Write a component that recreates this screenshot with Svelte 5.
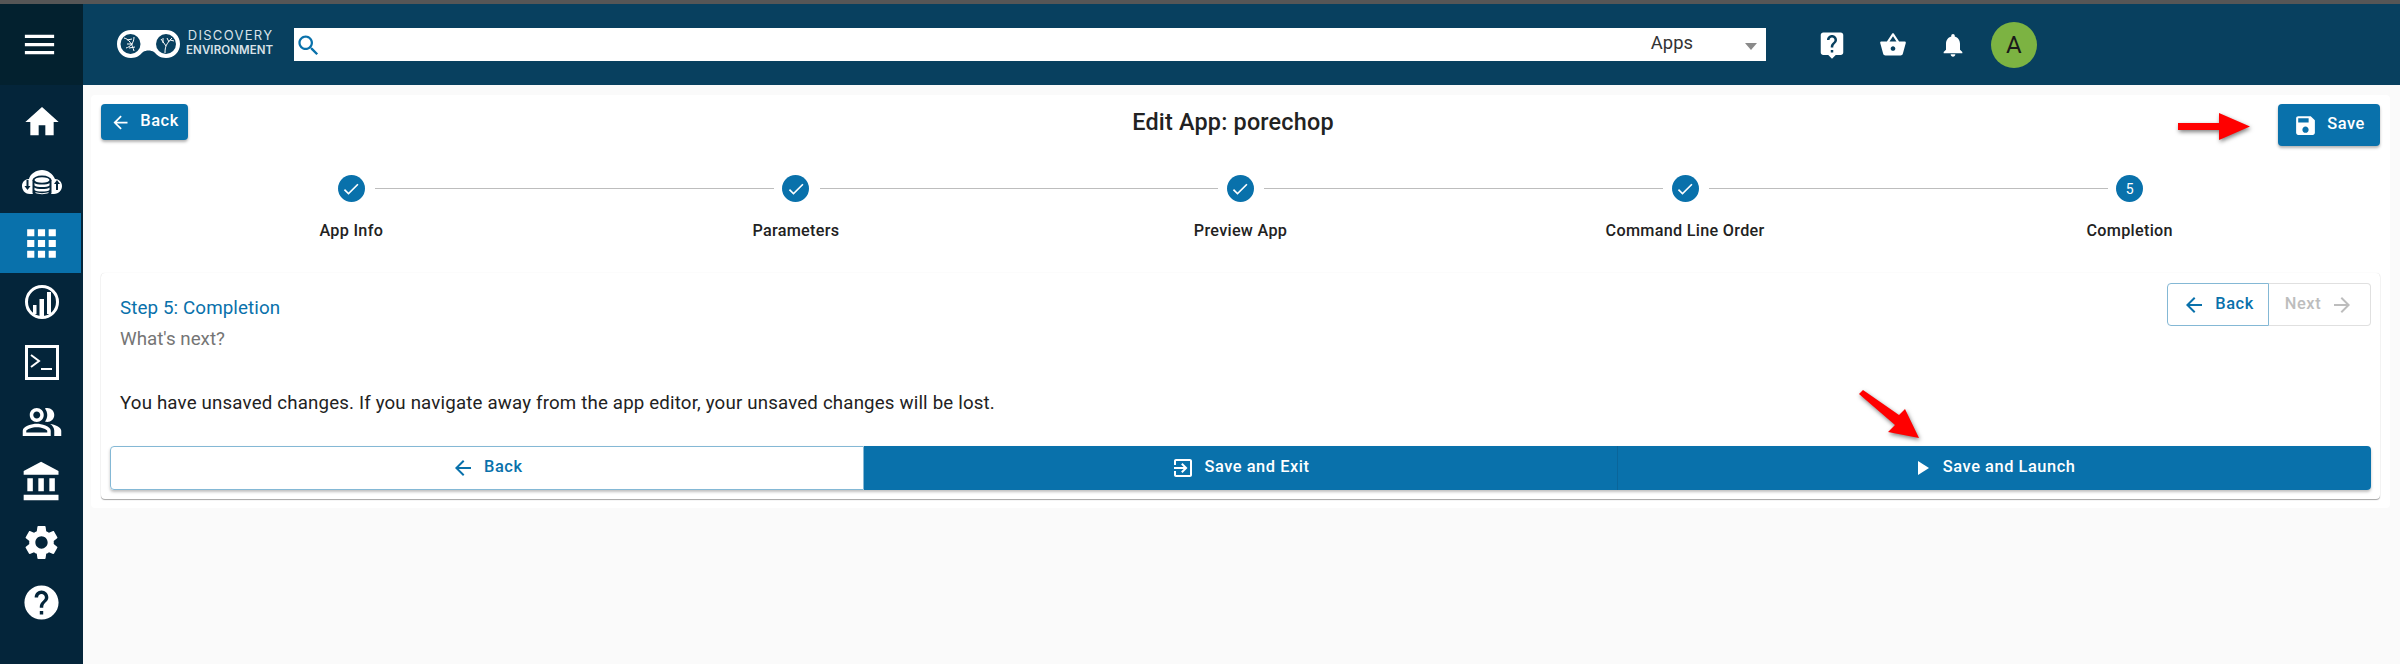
<script lang="ts">
  const icons: Record<string, string> = {
    menu: "M3 18h18v-2H3v2zm0-5h18v-2H3v2zm0-7v2h18V6H3z",
    home: "M10 20v-6h4v6h5v-8h3L12 3 2 12h3v8z",
    apps: "M4 8h4V4H4v4zm6 12h4v-4h-4v4zm-6 0h4v-4H4v4zm0-6h4v-4H4v4zm6 0h4v-4h-4v4zm6-10v4h4V4h-4zm-6 4h4V4h-4v4zm6 6h4v-4h-4v4zm0 6h4v-4h-4v4z",
    people:
      "M16.67 13.13C18.04 14.06 19 15.32 19 17v3h4v-3c0-2.18-3.57-3.47-6.33-3.87zM15 12c2.21 0 4-1.79 4-4s-1.79-4-4-4c-.47 0-.91.1-1.33.24C14.5 5.27 15 6.58 15 8s-.5 2.73-1.33 3.76c.42.14.86.24 1.33.24zM9 12c2.21 0 4-1.79 4-4s-1.79-4-4-4-4 1.79-4 4 1.79 4 4 4zm0-6c1.1 0 2 .9 2 2s-.9 2-2 2-2-.9-2-2 .9-2 2-2zM9 13c-2.67 0-8 1.34-8 4v3h16v-3c0-2.66-5.33-4-8-4zm6 5H3v-.99C3.2 16.29 6.3 15 9 15s5.8 1.29 6 2v1z",
    bank: "M4 10v7h3v-7H4zm6 0v7h3v-7h-3zM2 22h19v-3H2v3zm14-12v7h3v-7h-3zm-4.5-9L2 6v2h19V6l-9.5-5z",
    settings:
      "M19.14 12.94c.04-.3.06-.61.06-.94 0-.32-.02-.64-.07-.94l2.03-1.58c.18-.14.23-.41.12-.61l-1.92-3.32c-.12-.22-.37-.29-.59-.22l-2.39.96c-.5-.38-1.03-.7-1.62-.94l-.36-2.54c-.04-.24-.24-.41-.48-.41h-3.84c-.24 0-.43.17-.47.41l-.36 2.54c-.59.24-1.13.57-1.62.94l-2.39-.96c-.22-.08-.47 0-.59.22L2.74 8.87c-.12.21-.08.47.12.61l2.03 1.58c-.05.3-.09.63-.09.94s.02.64.07.94l-2.03 1.58c-.18.14-.23.41-.12.61l1.92 3.32c.12.22.37.29.59.22l2.39-.96c.5.38 1.03.7 1.62.94l.36 2.54c.05.24.24.41.48.41h3.84c.24 0 .44-.17.47-.41l.36-2.54c.59-.24 1.13-.56 1.62-.94l2.39.96c.22.08.47 0 .59-.22l1.92-3.32c.12-.22.07-.47-.12-.61l-2.01-1.58zM12 15.6c-1.98 0-3.6-1.62-3.6-3.6s1.62-3.6 3.6-3.6 3.6 1.62 3.6 3.6-1.62 3.6-3.6 3.6z",
    help: "M12 2C6.48 2 2 6.48 2 12s4.48 10 10 10 10-4.48 10-10S17.52 2 12 2zm1 17h-2v-2h2v2zm2.07-7.75l-.9.92C13.45 12.9 13 13.5 13 15h-2v-.5c0-1.1.45-2.1 1.17-2.83l1.24-1.26c.37-.36.59-.86.59-1.41 0-1.1-.9-2-2-2s-2 .9-2 2H8c0-2.21 1.79-4 4-4s4 1.79 4 4c0 .88-.36 1.68-.93 2.25z",
    search:
      "M15.5 14h-.79l-.28-.27C15.41 12.59 16 11.11 16 9.5 16 5.91 13.09 3 9.5 3S3 5.91 3 9.5 5.91 16 9.5 16c1.61 0 3.09-.59 4.23-1.57l.27.28v.79l5 4.99L20.49 19l-4.99-5zm-6 0C7.01 14 5 11.99 5 9.5S7.01 5 9.5 5 14 7.01 14 9.5 11.99 14 9.5 14z",
    livehelp:
      "M19 2H5c-1.11 0-2 .9-2 2v14c0 1.1.89 2 2 2h4l3 3 3-3h4c1.1 0 2-.9 2-2V4c0-1.1-.9-2-2-2zm-6 16h-2v-2h2v2zm2.07-7.75l-.9.92C13.45 11.9 13 12.5 13 14h-2v-.5c0-1.1.45-2.1 1.17-2.83l1.24-1.26c.37-.36.59-.86.59-1.41 0-1.1-.9-2-2-2s-2 .9-2 2H8c0-2.21 1.79-4 4-4s4 1.79 4 4c0 .88-.36 1.68-.93 2.25z",
    basket:
      "M17.21 9l-4.38-6.56c-.19-.28-.51-.42-.83-.42-.32 0-.64.14-.83.43L6.79 9H2c-.55 0-1 .45-1 1 0 .09.01.18.04.27l2.54 9.27c.23.84 1 1.46 1.92 1.46h13c.92 0 1.69-.62 1.93-1.46l2.54-9.27L23 10c0-.55-.45-1-1-1h-4.79zM9 9l3-4.4L15 9H9zm3 8c-1.1 0-2-.9-2-2s.9-2 2-2 2 .9 2 2-.9 2-2 2z",
    bell: "M12 22c1.1 0 2-.9 2-2h-4c0 1.1.89 2 2 2zm6-6v-5c0-3.07-1.64-5.64-4.5-6.32V4c0-.83-.67-1.5-1.5-1.5s-1.5.67-1.5 1.5v.68C7.63 5.36 6 7.92 6 11v5l-2 2v1h16v-1l-2-2z",
    save: "M17 3H5c-1.11 0-2 .9-2 2v14c0 1.1.89 2 2 2h14c1.1 0 2-.9 2-2V7l-4-4zm-5 16c-1.66 0-3-1.34-3-3s1.34-3 3-3 3 1.34 3 3-1.34 3-3 3zm3-10H5V5h10v4z",
    exit: "M10.09 15.59L11.5 17l5-5-5-5-1.41 1.41L12.67 11H3v2h9.67l-2.58 2.59zM19 3H5c-1.11 0-2 .9-2 2v4h2V5h14v14H5v-4H3v4c0 1.1.89 2 2 2h14c1.1 0 2-.9 2-2V5c0-1.1-.9-2-2-2z",
    play: "M8 5v14l11-7z",
    back: "M20 11H7.83l5.59-5.59L12 4l-8 8 8 8 1.41-1.41L7.83 13H20v-2z",
    forward: "M12 4l-1.41 1.41L16.17 11H4v2h12.17l-5.58 5.59L12 20l8-8z",
    check: "M9 16.17L4.83 12l-1.41 1.41L9 19 21 7l-1.41-1.41z",
  };

  const steps = ["App Info", "Parameters", "Preview App", "Command Line Order", "Completion"];
  const activeStep = 4;
</script>

{#snippet icon(name: string, size: number)}
  <svg class="icon" width={size} height={size} viewBox="0 0 24 24" aria-hidden="true">
    <path d={icons[name]} />
  </svg>
{/snippet}

<div class="topline"></div>
<div class="page">
  <nav class="sidebar">
    <div class="burger">{@render icon("menu", 39)}</div>
    <ul class="nav-list">
      <li>{@render icon("home", 40)}</li>
      <li>
        <svg width="42" height="27" viewBox="0 0 42 27" aria-hidden="true">
          <path class="fill" d="M9 25C3 25 1 20 1 17c0-4 3-7 7-7 1-5 7-9 13-9s11 4 13 9c4 0 7 3 7 7 0 4-3 8-8 8z" />
          <ellipse class="dark" cx="21" cy="11" rx="9.5" ry="4.4" />
          <path class="dark" d="M11.500 11h19v13c0 1.500-4 3-9.500 3s-9.500-1.500-9.500-3z" />
          <ellipse class="fill" cx="21" cy="11" rx="7.500" ry="2.800" />
          <path class="fill" d="M13.500 14c2 2 13 2 15 0v2.500c-2 2-13 2-15 0zm0 4.500c2 2 13 2 15 0v2.500c-2 2-13 2-15 0zm1 4.500c3 1.500 10 1.500 13 0v1c-3 1.500-10 1.500-13 0z" />
          <path class="dark" d="M5.500 11h2v6h2l-3 4-3-4h2zM35 21h2v-6h2l-3-4-3 4h2z" />
        </svg>
      </li>
      <li class="active">{@render icon("apps", 43)}</li>
      <li>
        <svg width="36" height="36" viewBox="0 0 36 36" aria-hidden="true">
          <circle class="ring" cx="18" cy="18" r="15.500" />
          <path class="fill" d="M9 21h3.500v9H9zM15.500 15h4.500v18h-4.500zM23 8h4v22h-4z" />
        </svg>
      </li>
      <li>
        <svg width="34" height="35" viewBox="0 0 34 35" aria-hidden="true">
          <rect class="frame" x="1.500" y="1.500" width="31" height="32" />
          <path class="chev" d="M6 10l8 6-8 6" />
          <path class="fill" d="M16 23h11v2H16z" />
        </svg>
      </li>
      <li>{@render icon("people", 42)}</li>
      <li>{@render icon("bank", 44)}</li>
      <li>{@render icon("settings", 41)}</li>
      <li>{@render icon("help", 41)}</li>
    </ul>
  </nav>

  <div class="main">
    <header class="appbar">
      <div class="brand">
        <svg width="63" height="29" viewBox="0 0 63 29" aria-hidden="true">
          <path class="fill" d="M14 1h35c8 0 14 6 14 14s-6 14-14 14c-6 0-9-3-12-6-3-2-8-2-11 0-3 3-6 6-12 6C6 29 0 23 0 15S6 1 14 1z" />
          <circle class="lens" cx="13.500" cy="15" r="10" />
          <circle class="lens" cx="49" cy="15" r="10" />
          <path class="thin" d="M7 9c5 1 8 6 10 13M9 19c4-1 8-5 8-11M10 11l5-1M10 15l6 0M12 19l6-1" />
          <path class="thin" d="M48 24c0-6 1-9 7-15M49 17l-5-7M46 14l0-5M52 13l-2-4M53 11l4 1" />
        </svg>
        <div class="brand-text">
          <span class="brand-top">DISCOVERY</span>
          <span class="brand-bottom">ENVIRONMENT</span>
        </div>
      </div>

      <div class="search">
        <span class="search-icon">{@render icon("search", 27)}</span>
        <span class="scope">Apps</span>
        <span class="caret"></span>
      </div>

      <div class="actions">
        <span class="action">{@render icon("livehelp", 30)}</span>
        <span class="action">{@render icon("basket", 28)}</span>
        <span class="action">{@render icon("bell", 28)}</span>
        <span class="action"><span class="avatar">A</span></span>
      </div>
    </header>

    <div class="content">
      <section class="panel">
        <div class="toolbar">
          <button type="button" class="btn contained small">{@render icon("back", 21)}<span>Back</span></button>
          <h1>Edit App: porechop</h1>
          <button type="button" class="btn contained tall">{@render icon("save", 25)}<span>Save</span></button>
        </div>

        <ol class="stepper">
          {#each steps as label, i}
            <li class="step" class:last={i === steps.length - 1}>
              <span class="dot">
                {#if i < activeStep}
                  {@render icon("check", 20)}
                {:else}
                  {i + 1}
                {/if}
              </span>
              <span class="step-label">{label}</span>
            </li>
          {/each}
        </ol>

        <div class="card">
          <div class="card-head">
            <div class="card-title">
              <div class="step-title">Step 5: Completion</div>
              <div class="step-sub">What's next?</div>
            </div>
            <div class="pager">
              <button type="button" class="btn outlined">{@render icon("back", 24)}<span>Back</span></button>
              <button type="button" class="btn disabled" disabled><span>Next</span>{@render icon("forward", 24)}</button>
            </div>
          </div>

          <p class="message">You have unsaved changes. If you navigate away from the app editor, your unsaved changes will be lost.</p>

          <div class="btn-group">
            <button type="button" class="btn outlined">{@render icon("back", 24)}<span>Back</span></button>
            <button type="button" class="btn contained">{@render icon("exit", 24)}<span>Save and Exit</span></button>
            <button type="button" class="btn contained launch">{@render icon("play", 24)}<span>Save and Launch</span></button>
          </div>
        </div>

        <svg class="pointer pointer-save" width="76" height="32" viewBox="0 0 76 32" aria-hidden="true">
          <path d="M0 10h41V0l31 13.500-31 13.500V17H0z" />
        </svg>
        <svg class="pointer pointer-launch" width="72" height="60" viewBox="0 0 72 60" aria-hidden="true">
          <path d="M4 9l4-4 36 25 6-6 14 29-31-6 7-7z" />
        </svg>
      </section>
    </div>
  </div>
</div>

<style>
  :global(body) {
    margin: 0;
    background: #fafafa;
    font-family: Roboto, "Liberation Sans", sans-serif;
  }

  .topline {
    height: 4px;
    background: #565656;
  }

  .page {
    display: flex;
    min-height: 660px;
  }

  .icon {
    display: block;
    flex-shrink: 0;
    fill: currentColor;
  }

  .sidebar {
    width: 83px;
    flex-shrink: 0;
    background: #04253a;
    color: #fff;
  }

  .burger {
    height: 81px;
    display: flex;
    align-items: center;
    justify-content: center;
    padding-right: 4px;
    box-sizing: border-box;
    background: #03212f;
  }

  .nav-list {
    list-style: none;
    margin: 7px 0 0;
    padding: 0;
  }

  .nav-list li {
    height: 60px;
    width: 81px;
    display: flex;
    align-items: center;
    justify-content: center;
    padding-left: 2px;
    box-sizing: border-box;
  }

  .nav-list li.active {
    background: #0971ab;
    margin-top: 1px;
    margin-bottom: -1px;
  }

  .fill {
    fill: #fff;
  }

  .dark {
    fill: #04253a;
  }

  .ring {
    fill: none;
    stroke: #fff;
    stroke-width: 3;
  }

  .frame {
    fill: none;
    stroke: #fff;
    stroke-width: 3;
  }

  .chev {
    fill: none;
    stroke: #fff;
    stroke-width: 2;
  }

  .main {
    flex: 1;
    min-width: 0;
    display: flex;
    flex-direction: column;
  }

  .appbar {
    height: 81px;
    display: flex;
    align-items: center;
    background: #08405f;
    color: #fff;
    padding-left: 34px;
    box-sizing: border-box;
  }

  .brand {
    width: 177px;
    display: flex;
    align-items: center;
    gap: 6px;
    margin-top: -3px;
  }

  .lens {
    fill: #08405f;
  }

  .thin {
    fill: none;
    stroke: #fff;
    stroke-width: 1;
  }

  .brand-text {
    display: flex;
    flex-direction: column;
    align-items: flex-end;
    gap: 2px;
    font-family: Inter, "Liberation Sans", sans-serif;
    color: #d8e2e8;
    line-height: 13px;
  }

  .brand-top {
    font-size: 13px;
    letter-spacing: 1.3px;
  }

  .brand-bottom {
    font-size: 11.500px;
    font-weight: 600;
    letter-spacing: 0.1px;
  }

  .search {
    width: 1472px;
    height: 33px;
    display: flex;
    align-items: center;
    background: #fff;
    color: #0971ab;
  }

  .search-icon {
    margin-left: 1px;
    margin-top: 2px;
  }

  .scope {
    margin-left: auto;
    font-size: 18.400px;
    color: #333;
    margin-top: -5px;
  }

  .caret {
    margin: 3px 9px 0 52px;
    border-left: 6px solid transparent;
    border-right: 6px solid transparent;
    border-top: 7px solid #8a8a8a;
  }

  .actions {
    display: flex;
    margin-left: 36px;
  }

  .action {
    width: 60.500px;
    display: flex;
    justify-content: center;
    align-items: center;
  }

  .avatar {
    width: 46px;
    height: 46px;
    border-radius: 50%;
    background: #7cb342;
    color: #1a1a1a;
    display: flex;
    align-items: center;
    justify-content: center;
    font-size: 24px;
  }

  .content {
    padding: 10px 10px 0 8px;
  }

  .panel {
    position: relative;
    background: #fff;
    border-radius: 4px;
    padding: 9px 10px;
    height: 413px;
    box-sizing: border-box;
  }

  .toolbar {
    display: flex;
    justify-content: space-between;
    align-items: flex-start;
  }

  h1 {
    margin: 0;
    font-size: 23.400px;
    line-height: 36px;
    font-weight: 500;
    letter-spacing: 0.2px;
    color: #222;
  }

  .btn {
    display: inline-flex;
    align-items: center;
    justify-content: center;
    gap: 9px;
    border: 0;
    border-radius: 4px;
    font-family: inherit;
    font-size: 16.400px;
    font-weight: 500;
    letter-spacing: 0.55px;
    padding: 0;
    box-sizing: border-box;
  }

  .btn span {
    margin-top: -3px;
  }

  .contained {
    background: #0971ab;
    color: #fff;
  }

  .small {
    width: 87px;
    height: 36px;
    box-shadow: 0 2px 3px rgba(0, 0, 0, 0.3);
  }

  .tall {
    width: 102px;
    height: 42px;
    box-shadow: 0 2px 3px rgba(0, 0, 0, 0.3);
  }

  .outlined {
    background: #fff;
    color: #0971ab;
    border: 1px solid #84b8d5;
  }

  .disabled {
    background: #fff;
    color: #bdbdbd;
    border: 1px solid #e0e0e0;
  }

  .stepper {
    list-style: none;
    margin: 29px 0 0;
    padding: 0 28px;
    display: flex;
  }

  .step {
    flex: 1;
    position: relative;
    display: flex;
    flex-direction: column;
    align-items: center;
  }

  .step:not(.last)::after {
    content: "";
    position: absolute;
    top: 13px;
    left: calc(50% + 24px);
    width: calc(100% - 46px);
    height: 1px;
    background: #bdbdbd;
  }

  .dot {
    width: 27px;
    height: 27px;
    border-radius: 50%;
    background: #0971ab;
    color: #fff;
    display: flex;
    align-items: center;
    justify-content: center;
    font-size: 14px;
  }

  .step-label {
    margin-top: 19px;
    font-size: 16.200px;
    line-height: 20px;
    font-weight: 500;
    letter-spacing: 0.3px;
    color: #222;
  }

  .card {
    margin-top: 32px;
    height: 226px;
    box-sizing: border-box;
    padding: 10px 9px 9px;
    background: #fff;
    border-radius: 4px;
    box-shadow:
      0 1px 1px rgba(0, 0, 0, 0.35),
      0 0 1px rgba(0, 0, 0, 0.15);
  }

  .card-head {
    display: flex;
    justify-content: space-between;
    align-items: flex-start;
    height: 67px;
  }

  .card-title {
    padding: 13px 0 0 10px;
  }

  .step-title {
    font-size: 18.800px;
    line-height: 24px;
    letter-spacing: 0.1px;
    color: #0971ab;
  }

  .step-sub {
    margin-top: 8px;
    font-size: 18.800px;
    line-height: 22px;
    color: #757575;
  }

  .pager {
    display: flex;
  }

  .pager .btn {
    width: 102px;
    height: 43px;
  }

  .pager .outlined {
    border-radius: 4px 0 0 4px;
  }

  .pager .disabled {
    border-left: 0;
    border-radius: 0 4px 4px 0;
  }

  .message {
    margin: 41px 0 0;
    padding-left: 10px;
    font-size: 18.700px;
    line-height: 24px;
    letter-spacing: 0.17px;
    color: #222;
  }

  .btn-group {
    margin-top: 31px;
    display: grid;
    grid-template-columns: repeat(3, 1fr);
    height: 44px;
    border-radius: 4px;
    box-shadow: 0 2px 3px rgba(0, 0, 0, 0.25);
  }

  .btn-group .btn {
    height: 44px;
    border-radius: 0;
  }

  .btn-group .outlined {
    border-radius: 4px 0 0 4px;
  }

  .btn-group .contained + .contained {
    border-left: 1px solid #0a659a;
    border-radius: 0 4px 4px 0;
  }

  .btn-group .launch {
    padding-right: 4px;
  }

  .pointer {
    position: absolute;
    fill: #f00;
    filter: drop-shadow(1px 2px 2px rgba(0, 0, 0, 0.5));
  }

  .pointer-save {
    left: 2087px;
    top: 18px;
  }

  .pointer-launch {
    left: 1764px;
    top: 290px;
  }
</style>
